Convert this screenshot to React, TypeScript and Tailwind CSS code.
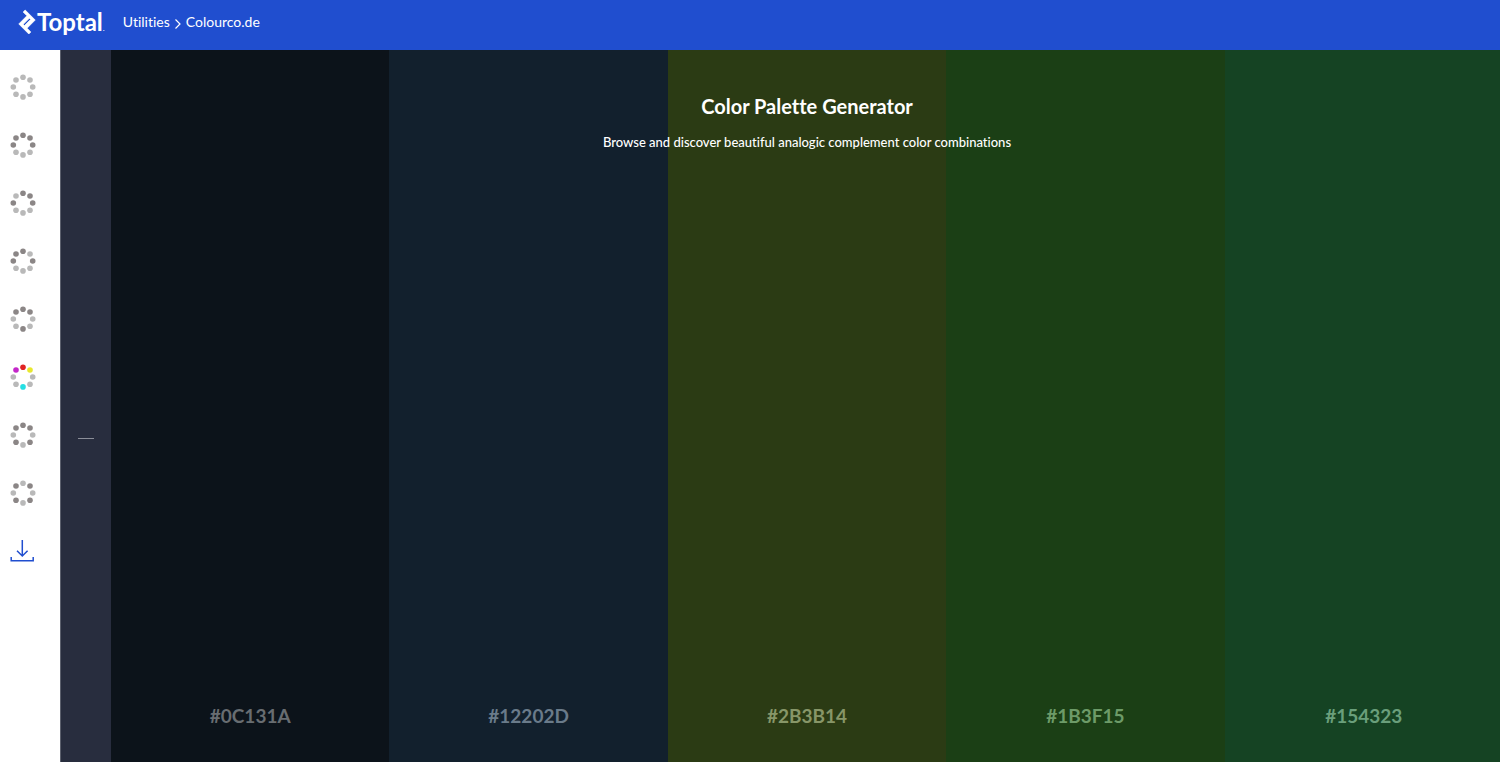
import { useState } from "react";
import { SiToptal } from "react-icons/si";

// dots go clockwise from the top
const DOTS = [
  { cx: 13, cy: 3.3 },
  { cx: 20, cy: 6 },
  { cx: 22.7, cy: 13 },
  { cx: 20, cy: 20.2 },
  { cx: 13, cy: 22.9 },
  { cx: 6, cy: 20.2 },
  { cx: 3.3, cy: 13 },
  { cx: 6, cy: 6 },
];

const WHEEL = ["#e02424", "#e8e82f", "#6fd62c", "#25c95b", "#25dfe3", "#2a55dd", "#6a2bd6", "#c427c9"];

const schemes = [
  { name: "monochromatic", on: [] },
  { name: "analogic", on: [7, 0, 1, 2, 6] },
  { name: "complement", on: [0, 1, 2, 6] },
  { name: "split complement", on: [6, 7, 0, 2] },
  { name: "triad", on: [7, 0, 1, 4] },
  { name: "analogic complement", on: [7, 0, 1, 4] },
  { name: "pentagon", on: [7, 0, 1, 3, 5] },
  { name: "quad", on: [1, 3, 5, 7] },
];

const colors = [
  { hex: "#0C131A", bg: "bg-[#0c131a]", text: "text-[#686d71]" },
  { hex: "#12202D", bg: "bg-[#12202d]", text: "text-[#6a7b8a]" },
  { hex: "#2B3B14", bg: "bg-[#2b3b14]", text: "text-[#879668]" },
  { hex: "#1B3F15", bg: "bg-[#1b3f15]", text: "text-[#6d9b68]" },
  { hex: "#154323", bg: "bg-[#154323]", text: "text-[#6a9f7b]" },
];

export default function App() {
  const [active, setActive] = useState(5);

  return (
    <div className="flex min-h-screen flex-col overflow-hidden bg-white font-['Lato','Open_Sans',sans-serif] [font-variant-ligatures:none]">
      <header className="flex h-[50px] items-center bg-[#204ecf] pb-1.5 pl-[15px] text-white">
        <a href="#home" className="flex items-center">
          <SiToptal className="h-6 w-6 overflow-visible stroke-current" strokeWidth={0.7} aria-hidden />
          <span className="-ml-0.5 text-2xl leading-6 font-bold">Toptal</span>
          <span className="mt-3 text-[8px] leading-2">.</span>
        </a>
        <nav className="ml-[18px] flex items-center gap-1 text-sm leading-5">
          <a href="#utilities">Utilities</a>
          <ChevronIcon className="mt-1 h-3 w-2" />
          <a href="#colourcode">Colourco.de</a>
        </nav>
      </header>

      <div className="flex flex-1">
        <aside className="flex w-[60px] shrink-0 flex-col items-start pt-2">
          {schemes.map((s, i) => (
            <button
              key={s.name}
              type="button"
              aria-label={s.name}
              aria-pressed={active === i}
              onClick={() => setActive(i)}
              className="flex h-[58px] w-full items-center pl-[10px]"
            >
              <WheelIcon on={s.on} colored={active === i} />
            </button>
          ))}
          <button type="button" aria-label="Download" className="flex h-[58px] w-full items-center pl-[10px]">
            <DownloadIcon className="h-6 w-6" />
          </button>
        </aside>

        <button
          type="button"
          aria-label="Remove color"
          className="flex w-[51px] shrink-0 items-center justify-center border-l border-[#5c606d] bg-[#282d3e] pt-16"
        >
          <span className="h-px w-4 bg-[#8b8e98]" />
        </button>

        {/* palette runs slightly past the right edge */}
        <main className="relative -mr-[3px] flex flex-1">
          {colors.map((c) => (
            <div key={c.hex} className={`flex flex-1 flex-col items-center justify-end pb-8 ${c.bg}`}>
              <button type="button" className={`text-[19px] leading-7 font-bold ${c.text}`}>
                {c.hex}
              </button>
            </div>
          ))}
          <div className="absolute inset-x-0 top-[42px] text-center text-white">
            <h1 className="text-xl leading-7 font-bold">Color Palette Generator</h1>
            <p className="mt-2 text-[13px] leading-7 font-medium">
              Browse and discover beautiful analogic complement color combinations
            </p>
          </div>
        </main>
      </div>
    </div>
  );
}

function WheelIcon({ on, colored }: { on: number[]; colored: boolean }) {
  return (
    <svg viewBox="0 0 26 26" className="h-[26px] w-[26px]" aria-hidden>
      {DOTS.map((d, i) => (
        <circle
          key={i}
          cx={d.cx}
          cy={d.cy}
          r={2.8}
          fill={!on.includes(i) ? "#b9b9b9" : colored ? WHEEL[i] : "#8b8686"}
        />
      ))}
    </svg>
  );
}

function ChevronIcon({ className }: { className?: string }) {
  return (
    <svg viewBox="0 0 8 12" className={className} fill="none" stroke="currentColor" strokeWidth="1.2" aria-hidden>
      <path d="M1.500 1.500 6 6l-4.500 4.500" />
    </svg>
  );
}

function DownloadIcon({ className }: { className?: string }) {
  return (
    <svg viewBox="0 0 24 24" className={className} fill="none" stroke="#204ecf" strokeWidth="1.5" aria-hidden>
      <path d="M12.300 1v16M7 11.700l5.300 5.300 5.300-5.300M1.200 18v3.700h22V18" />
    </svg>
  );
}
